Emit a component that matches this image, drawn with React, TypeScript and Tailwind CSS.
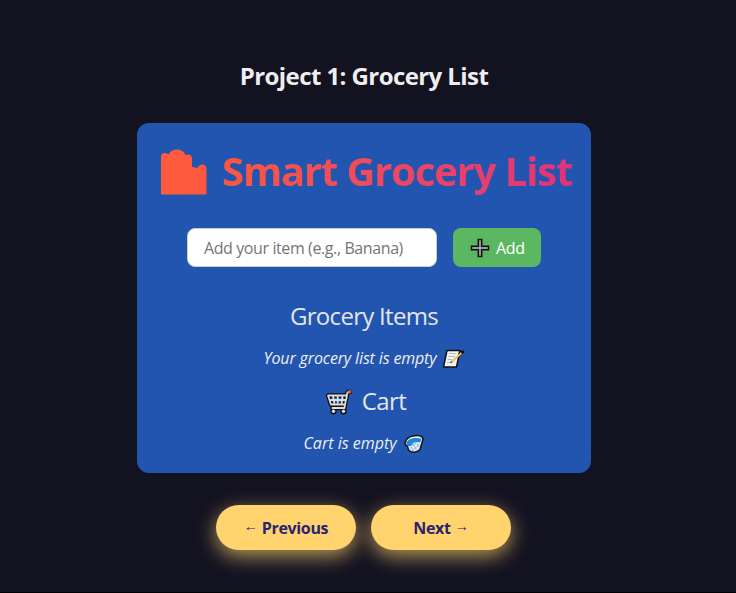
import React from "react";

const NoteIcon = () => (
  <svg className="h-[22px] w-[22px]" viewBox="0 0 22 22">
    <path d="M5 2.5H18L14.5 19H1.5Z" fill="#f3f3f3" stroke="#111" strokeWidth="1.5" strokeLinejoin="round" />
    <path d="M7 5.5H14M6.5 8.5H13M5.5 11.5H10M5 14.5H9" stroke="#b9b9b9" strokeWidth="1" />
    <path d="M18 6L20.5 4" stroke="#111" strokeWidth="3.2" strokeLinecap="round" />
    <path d="M10 13.5L19.5 5" stroke="#f5c04a" strokeWidth="1.8" />
    <path d="M8.7 14.8L10 13.5" stroke="#333" strokeWidth="1.2" />
  </svg>
);

const CartIcon = () => (
  <svg className="h-[28px] w-[28px]" viewBox="0 0 28 28" fill="none" strokeLinecap="round" strokeLinejoin="round">
    <g stroke="#111" strokeWidth="4.4">
      <path d="M3 7.5H22L20 16.5H6ZM21.5 7L23 4H25M20 16.5L19.5 20H7.5" />
      <circle cx="8.5" cy="23.2" r="1" />
      <circle cx="18.5" cy="23.2" r="1" />
    </g>
    <path d="M3 7.5H22L20 16.5H6ZM21.5 7L23 4M20 16.5L19.5 20H7.5M4.5 12H20.5M8 8L9.5 16M12.7 8V16M17.5 8L16.5 16" stroke="#ddd" strokeWidth="1.8" />
    <circle cx="24.8" cy="3.8" r="1.7" fill="#f05a42" />
    <circle cx="8.5" cy="23.2" r="1.7" fill="#ddd" />
    <circle cx="18.5" cy="23.2" r="1.7" fill="#ddd" />
  </svg>
);

const BasketIcon = () => (
  <svg className="h-[20px] w-[22px]" viewBox="0 0 22 20">
    <path d="M2 9C3 4 8 1 15 1.5C19 2 21 4 19.5 7L17 15.5C14 19 8 19 5.5 16L4.5 12C2.5 11.5 2 10.5 2 9Z" fill="#e2edf5" stroke="#111" strokeWidth="1.5" />
    <path d="M3.3 9C5 4.5 11 3 18.5 4.5L17.5 8L11 8.5L8 12H4.5Z" fill="#2587d8" />
    <path d="M8 13L11 17.5M10 10L14 16.5M14 9.5L16 13M17 9.5L9 17M13 9L7 14.5" stroke="#6fafdc" strokeWidth=".7" />
  </svg>
);

export default function App() {
  return (
    <div className="flex h-[593px] w-[736px] flex-col items-center overflow-hidden border-b border-black bg-[#131221] pr-2 font-['Open_Sans','Noto_Sans',sans-serif] text-[#eee]">
      <h1 className="mt-[58px] h-9 whitespace-nowrap text-[24px] leading-9 font-bold tracking-[-0.58px]">Project 1: Grocery List</h1>
      <main className="mt-[29px] flex h-[350px] w-[454px] shrink-0 flex-col items-center rounded-xl bg-[#2255b0]">
        <h2 className="mt-5 flex h-[58px] w-[406px] items-center">
          <svg className="mr-[15px] h-[46px] w-[46px] shrink-0" viewBox="0 0 46 46">
            <defs><linearGradient id="bag"><stop stopColor="#ff5d3d" /><stop offset="1" stopColor="#fc573f" /></linearGradient></defs>
            <path d="M0 45.5V8Q0 4 4 4Q6 4 7.5 5.5Q10 .5 16 .5Q22 .5 24.5 6Q31 4 31 10V18Q34 17.5 36 19.5Q38 15.5 42 15.5Q45.5 16 45.5 20V45.5Z" fill="url(#bag)" />
          </svg>
          <span className="-translate-y-px bg-gradient-to-r from-[#fc573f] to-[#df3379] bg-clip-text whitespace-nowrap text-[40px] leading-[58px] font-bold tracking-[-1.15px] text-transparent">Smart Grocery List</span>
        </h2>
        <form className="mt-[27px] flex h-[39px] gap-4" onSubmit={(e) => e.preventDefault()}>
          <input className="h-[39px] w-[250px] rounded-lg border border-[#ccc] bg-white px-4 text-[16px] tracking-[-0.4px] text-[#333] placeholder:text-[#757575]" placeholder="Add your item (e.g., Banana)" />
          <button className="flex h-[39px] w-[88px] items-center rounded-lg bg-[#5cb763] pl-[17px] text-[16px] tracking-[-0.3px] text-white">
            <svg className="mr-[6px] h-5 w-5" viewBox="0 0 20 20"><path d="M8.3 1.5H11.7V8.3H18.5V11.7H11.7V18.5H8.3V11.7H1.5V8.3H8.3Z" fill="#9c9c9c" stroke="#111" strokeWidth="1.5" /></svg>
            Add
          </button>
        </form>
        <h3 className="mt-[31px] h-9 whitespace-nowrap text-[24px] leading-9 tracking-[-0.7px] text-[#e5e5ea]">Grocery Items</h3>
        <p className="mt-[13px] flex h-6 items-center gap-[6px] whitespace-nowrap text-[16px] italic tracking-[-0.15px]"><span className="-translate-y-px">Your grocery list is empty</span><NoteIcon /></p>
        <h3 className="mt-[13px] flex h-9 items-center gap-[9px] pl-[3px] text-[24px] leading-9 tracking-[-0.6px] text-[#e5e5ea]"><CartIcon /><span className="-translate-y-px">Cart</span></h3>
        <p className="mt-3 flex h-6 items-center gap-[6px] whitespace-nowrap text-[16px] italic"><span className="-translate-y-px">Cart is empty</span><BasketIcon /></p>
      </main>
      <nav className="mt-8 mr-px flex gap-[15px] text-[16px] font-bold tracking-[-0.35px] text-[#2c2370]">
        <button className="flex h-[45px] w-[140px] items-center justify-center gap-[4px] rounded-full bg-[#ffd36e] shadow-[0_6px_20px_#ffd36eb3]"><span className="-translate-y-px font-['Liberation_Serif'] text-[14px] font-normal tracking-normal">←</span>Previous</button>
        <button className="flex h-[45px] w-[140px] items-center justify-center gap-[4px] rounded-full bg-[#ffd36e] shadow-[0_6px_20px_#ffd36eb3]">Next<span className="-translate-y-px font-['Liberation_Serif'] text-[14px] font-normal tracking-normal">→</span></button>
      </nav>
    </div>
  );
}
